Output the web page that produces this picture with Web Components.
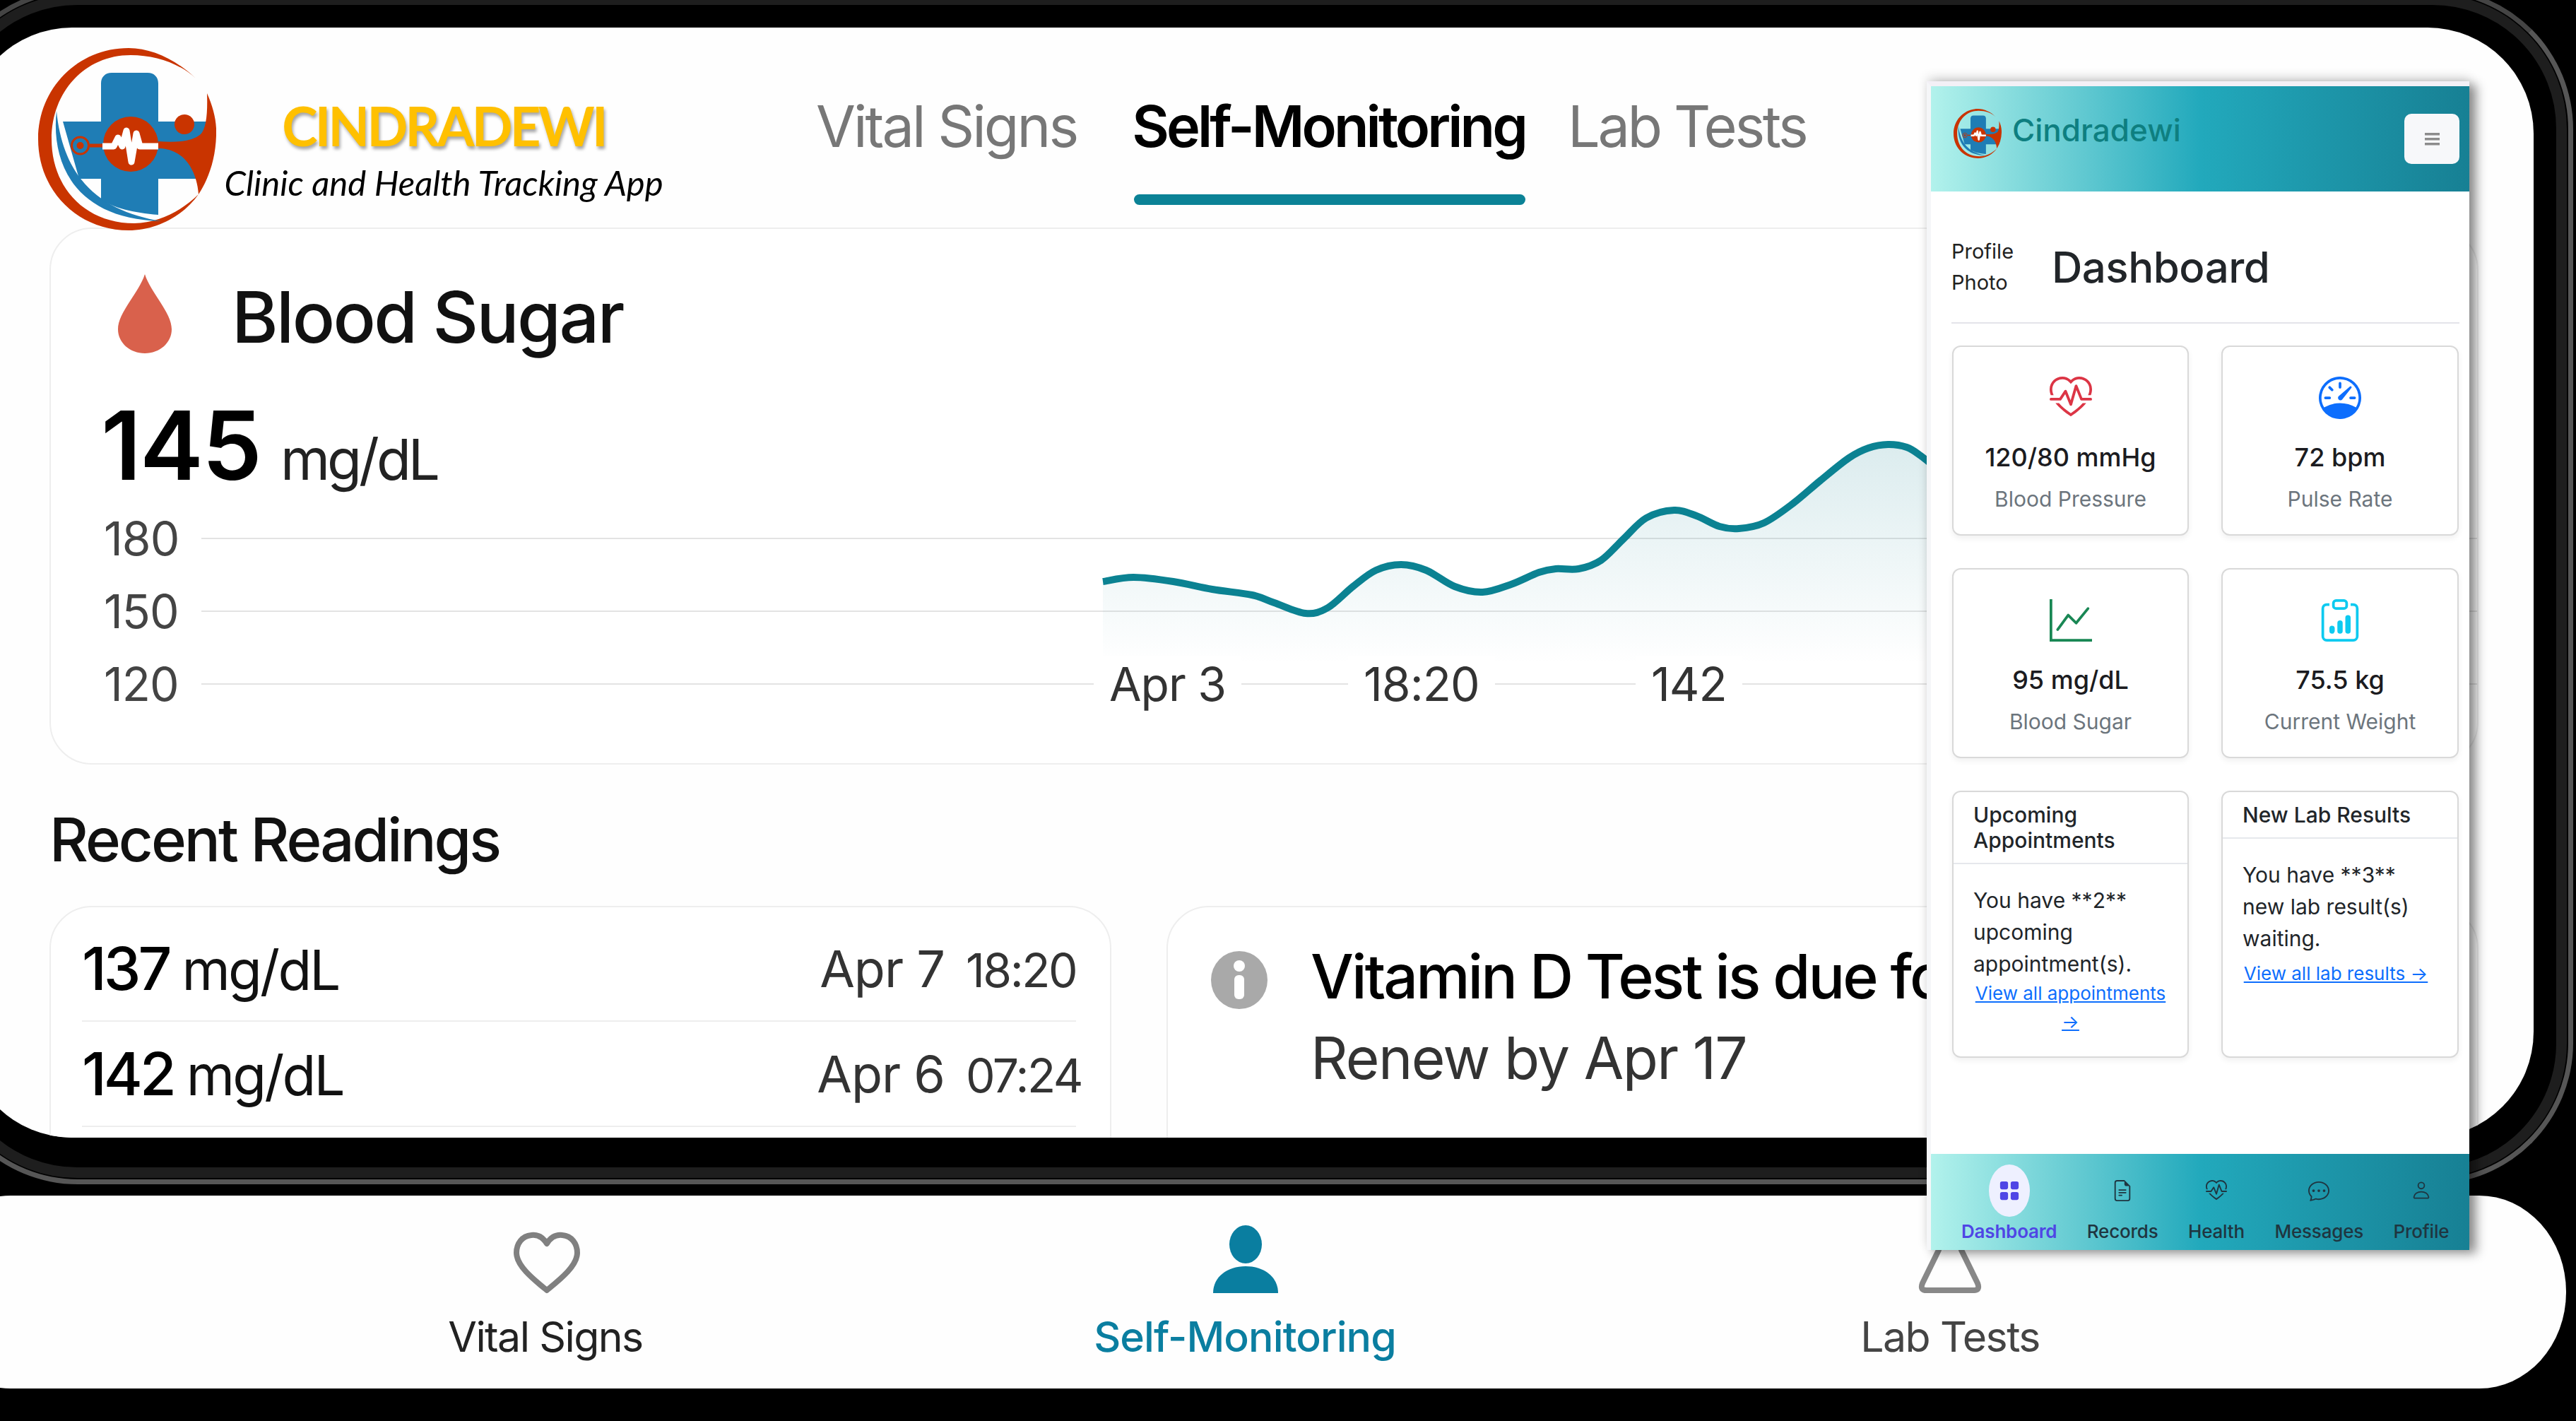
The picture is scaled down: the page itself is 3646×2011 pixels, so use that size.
<!doctype html>
<html>
<head>
<meta charset="utf-8">
<title>Cindradewi</title>
<style>
  html, body { margin: 0; background: #000; }
  body { font-family: Inter, "Liberation Sans", sans-serif; }
</style>
</head>
<body>
<cd-app></cd-app>
<script>
// bootstrap-icons style glyphs, 16x16 grid
const ICONS = {
	heartPulse: '<path d="m8 2.748-.717-.737C5.6.281 2.514.878 1.4 3.053.918 3.995.78 5.323 1.508 7H.43c-2.128-5.697 4.165-8.83 7.394-5.857q.09.083.176.171a3 3 0 0 1 .176-.17c3.23-2.974 9.522.159 7.394 5.856h-1.078c.728-1.677.59-3.005.108-3.947C13.486.878 10.4.28 8.717 2.01zM2.212 10h1.315C4.593 11.183 6.05 12.458 8 13.795c1.949-1.337 3.407-2.612 4.473-3.795h1.315c-1.265 1.566-3.14 3.25-5.788 5-2.648-1.75-4.523-3.434-5.788-5"/><path d="M10.464 3.314a.5.5 0 0 0-.945.049L7.921 8.956 6.464 5.314a.5.5 0 0 0-.88-.091L3.732 8H.5a.5.5 0 0 0 0 1H4a.5.5 0 0 0 .416-.223l1.473-2.209 1.647 4.118a.5.5 0 0 0 .945-.049l1.598-5.593 1.457 3.642A.5.5 0 0 0 12 9h3.5a.5.5 0 0 0 0-1h-3.162z"/>',
	speedometer: '<path d="M8 2a.5.5 0 0 1 .5.5V4a.5.5 0 0 1-1 0V2.5A.5.5 0 0 1 8 2M3.732 3.732a.5.5 0 0 1 .707 0l.915.914a.5.5 0 1 1-.708.708l-.914-.915a.5.5 0 0 1 0-.707M2 8a.5.5 0 0 1 .5-.5h1.586a.5.5 0 0 1 0 1H2.5A.5.5 0 0 1 2 8m9.5 0a.5.5 0 0 1 .5-.5h1.5a.5.5 0 0 1 0 1H12a.5.5 0 0 1-.5-.5m.754-4.246a.39.39 0 0 0-.527-.02L7.547 7.31A.91.91 0 1 0 8.85 8.569l3.434-4.297a.39.39 0 0 0-.029-.518z"/><path fill-rule="evenodd" d="M6.664 15.889A8 8 0 1 1 9.336.11a8 8 0 0 1-2.672 15.78zm-4.665-4.283A11.95 11.95 0 0 1 8 10c2.186 0 4.236.585 6.001 1.606a7 7 0 1 0-12.002 0"/>',
	graphUp: '<path fill-rule="evenodd" d="M0 0h1v15h15v1H0zm14.817 3.113a.5.5 0 0 1 .07.704l-4.5 5.5a.5.5 0 0 1-.74.037L7.06 6.767l-3.656 5.027a.5.5 0 0 1-.808-.588l4-5.5a.5.5 0 0 1 .758-.06l2.609 2.61 4.15-5.073a.5.5 0 0 1 .704-.07"/>',
	clipboardData: '<path d="M4 11a1 1 0 1 1 2 0v1a1 1 0 1 1-2 0zm6-4a1 1 0 1 1 2 0v5a1 1 0 1 1-2 0zM7 9a1 1 0 0 1 2 0v3a1 1 0 1 1-2 0z"/><path d="M4 1.5H3a2 2 0 0 0-2 2V14a2 2 0 0 0 2 2h10a2 2 0 0 0 2-2V3.5a2 2 0 0 0-2-2h-1v1h1a1 1 0 0 1 1 1V14a1 1 0 0 1-1 1H3a1 1 0 0 1-1-1V3.5a1 1 0 0 1 1-1h1z"/><path d="M9.5 1a.5.5 0 0 1 .5.5v1a.5.5 0 0 1-.5.5h-3a.5.5 0 0 1-.5-.5v-1a.5.5 0 0 1 .5-.5zm-3-1A1.5 1.5 0 0 0 5 1.5v1A1.5 1.5 0 0 0 6.5 4h3A1.5 1.5 0 0 0 11 2.5v-1A1.5 1.5 0 0 0 9.5 0z"/>',
	gridFill: '<path d="M1 2.5A1.5 1.5 0 0 1 2.5 1h3A1.5 1.5 0 0 1 7 2.5v3A1.5 1.5 0 0 1 5.5 7h-3A1.5 1.5 0 0 1 1 5.5zm8 0A1.5 1.5 0 0 1 10.5 1h3A1.5 1.5 0 0 1 15 2.5v3A1.5 1.5 0 0 1 13.5 7h-3A1.5 1.5 0 0 1 9 5.5zm-8 8A1.5 1.5 0 0 1 2.5 9h3A1.5 1.5 0 0 1 7 10.5v3A1.5 1.5 0 0 1 5.5 15h-3A1.5 1.5 0 0 1 1 13.5zm8 0a1.5 1.5 0 0 1 1.5-1.5h3a1.5 1.5 0 0 1 1.5 1.5v3a1.5 1.5 0 0 1-1.5 1.5h-3A1.5 1.5 0 0 1 9 13.5z"/>',
	fileText: '<path d="M5.5 7a.5.5 0 0 0 0 1h5a.5.5 0 0 0 0-1zM5 9.5a.5.5 0 0 1 .5-.5h5a.5.5 0 0 1 0 1h-5a.5.5 0 0 1-.5-.5m0 2a.5.5 0 0 1 .5-.5h2a.5.5 0 0 1 0 1h-2a.5.5 0 0 1-.5-.5"/><path d="M9.5 0H4a2 2 0 0 0-2 2v12a2 2 0 0 0 2 2h8a2 2 0 0 0 2-2V4.5zm0 1v2A1.5 1.5 0 0 0 11 4.5h2V14a1 1 0 0 1-1 1H4a1 1 0 0 1-1-1V2a1 1 0 0 1 1-1z"/>',
	chatDots: '<path d="M5 8a1 1 0 1 1-2 0 1 1 0 0 1 2 0m4 0a1 1 0 1 1-2 0 1 1 0 0 1 2 0m3 1a1 1 0 1 0 0-2 1 1 0 0 0 0 2"/><path d="m2.165 15.803.02-.004c1.83-.363 2.948-.842 3.468-1.105A9 9 0 0 0 8 15c4.418 0 8-3.134 8-7s-3.582-7-8-7-8 3.134-8 7c0 1.76.743 3.37 1.97 4.6a10.4 10.4 0 0 1-.524 2.318l-.003.011a11 11 0 0 1-.244.637c-.079.186.074.394.273.362a22 22 0 0 0 .693-.125m.8-3.108a1 1 0 0 0-.287-.801C1.618 10.83 1 9.468 1 8c0-3.192 3.004-6 7-6s7 2.808 7 6-3.004 6-7 6a8 8 0 0 1-2.088-.272 1 1 0 0 0-.711.074c-.387.196-1.24.57-2.634.893a11 11 0 0 0 .398-2"/>',
	person: '<circle cx="8" cy="3.6" r="2.7" fill="none" stroke="currentColor" stroke-width="1.1"/><path d="M2.6 14.6c-.8 0-1.1-.6-1-1.2C2 10.6 4.800 9 8 9s6 1.600 6.400 4.400c.1.600-.2 1.200-1 1.200z" fill="none" stroke="currentColor" stroke-width="1.1"/>'
}

const svgIcon = (name, size, color) =>
	`<svg width="${size}" height="${size}" viewBox="0 0 16 16" fill="${color}" style="color:${color}">${ICONS[name]}</svg>`

class CdLogo extends HTMLElement {
	connectedCallback() {
		const w = this.getAttribute('width') || 252
		const h = this.getAttribute('height') || 258
		this.attachShadow({ mode: 'open' }).innerHTML = `
      <style>:host { display: block; line-height: 0; }</style>
      <svg width="${w}" height="${h}" viewBox="54 68 252 258" preserveAspectRatio="none">
        <path fill="#c93400" d="M277 111C250 85 215 68 182 68 110 68 54 125 54 197c0 73 56 129 128 129 40 0 78-21 99-51-26 25-56 40-91 41C120 316 73 265 73 197 73 130 120 78 185 78c35 0 70 12 92 33z"/>
        <path fill="#1f7db5" d="M80 157c-8 73 25 153 148 156-78-13-138-53-148-156z"/>
        <path fill="#1f7db5" d="M143 118c0-9 6-15 15-15h51c9 0 15 6 15 15v54h69v81h-69v51c-35-3-65-10-81-22v-29h-31l-23-81h54z"/>
        <path fill="#c93400" d="M224 200c28 2 48 0 60-10 8-8 10-30 9-58 9 20 14 40 13 60-1 32-10 60-25 83-2-25-12-50-34-60-6-3-14-5-23-5z"/>
        <ellipse cx="261" cy="176" rx="14" ry="14" fill="#c93400"/>
        <ellipse cx="185" cy="204" rx="39" ry="39" fill="#c93400"/>
        <path stroke="#c93400" stroke-width="5" d="M127 206h24"/>
        <circle cx="113.500" cy="206" r="12" fill="none" stroke="#c93400" stroke-width="3"/>
        <circle cx="113.500" cy="206" r="5" fill="#c93400"/>
        <path fill="none" stroke="#fff" stroke-width="9" stroke-linejoin="round" d="M145 207h16l6-12 6 12 6-22 7 44 7-40 5 18h26"/>
      </svg>`
	}
}

class CdBezel extends HTMLElement {
	connectedCallback() {
		this.attachShadow({ mode: 'open' }).innerHTML = `
      <style>
        :host { position: absolute; left: -90px; top: -17px; width: 3732px; height: 1693px; box-sizing: border-box; border: 7px solid #565656; border-top-color: #444; border-radius: 200px; }
        div { position: absolute; inset: 2px; border: 15px solid #1e1e1e; border-radius: 190px; }
      </style>
      <div></div>`
	}
}

class CdBrand extends HTMLElement {
	connectedCallback() {
		this.attachShadow({ mode: 'open' }).innerHTML = `
      <style>
        :host { display: flex; flex-direction: column; align-items: center; width: 620px; margin-left: 12px; margin-top: 97px; font-family: Lato, "Open Sans", sans-serif; }
        .name { color: #ffc000; font-weight: 700; font-size: 76px; line-height: 84px; letter-spacing: -3.7px; text-shadow: 2px 4px 4px rgba(0,0,0,.35); white-space: nowrap; }
        .tag { margin-top: 11px; color: #000; font-style: italic; font-size: 49px; line-height: 54px; white-space: nowrap; }
      </style>
      <div class="name"><slot name="name"></slot></div>
      <div class="tag"><slot name="tag"></slot></div>`
	}
}

class CdTopTab extends HTMLElement {
	connectedCallback() {
		const active = this.hasAttribute('active')
		this.attachShadow({ mode: 'open' }).innerHTML = `
      <style>
        :host { display: block; font-size: 81px; line-height: 100px; letter-spacing: ${active ? -3.9 : -3}px; white-space: nowrap; color: ${active ? '#000' : '#777'}; font-weight: ${active ? 600 : 400}; }
        .bar { height: 15px; margin-top: 46px; margin-left: 3px; border-radius: 8px; background: ${active ? '#0b8296' : 'transparent'}; }
      </style>
      <slot></slot>
      <div class="bar"></div>`
	}
}

class CdTrendCard extends HTMLElement {
	connectedCallback() {
		const pts = [[1561,823],[1605,817],[1662,823],[1718,834],[1775,842],[1807,853],[1852,868],[1884,860],[1920,830],[1953,807],[1989,799],[2025,807],[2066,830],[2106,838],[2147,827],[2187,810],[2211,805],[2244,805],[2276,793],[2308,763],[2341,733],[2381,722],[2413,730],[2446,745],[2474,748],[2510,740],[2551,713],[2591,680],[2632,648],[2660,634],[2688,629],[2715,633],[2735,645],[2760,665]]
			.map(([x, y]) => [1561 + (x - 1561) * 0.986, y])
		// catmull-rom through the measured points
		let line = `M${pts[0][0]} ${pts[0][1]}`
		for (let i = 0; i < pts.length - 1; i++) {
			const p0 = pts[i - 1] || pts[i], p1 = pts[i], p2 = pts[i + 1], p3 = pts[i + 2] || p2
			line += `C${p1[0] + (p2[0] - p0[0]) / 6} ${p1[1] + (p2[1] - p0[1]) / 6} ${p2[0] - (p3[0] - p1[0]) / 6} ${p2[1] - (p3[1] - p1[1]) / 6} ${p2[0]} ${p2[1]}`
		}
		this.attachShadow({ mode: 'open' }).innerHTML = `
      <style>
        :host { display: block; position: relative; box-sizing: border-box; width: 3438px; height: 760px; background: #fff; border: 2px solid #eee; border-radius: 60px; color: #111; }
        .title { display: flex; align-items: center; height: 112px; margin: 64px 0 0 95px; gap: 85px; font-size: 100px; font-weight: 500; letter-spacing: -2.6px; }
        .title span { position: relative; top: 4px; }
        .value { display: flex; align-items: baseline; gap: 28px; height: 136px; margin: 62px 0 0 71px; line-height: 136px; }
        .value b { font-size: 135px; font-weight: 600; color: #000; letter-spacing: -2px; }
        .value span { font-size: 80px; color: #222; letter-spacing: -4px; }
        .chart { margin-top: 12px; }
        .row { display: flex; align-items: center; height: 103px; padding-left: 75px; font-size: 66px; color: #444; letter-spacing: -1px; }
        .row span { width: 138px; flex: none; }
        .row i { flex: 1; height: 2px; background: #e3e3e3; }
        svg.curve { position: absolute; left: -2px; top: -2px; pointer-events: none; }
        .tick { position: absolute; top: 604px; height: 80px; padding: 0 22px; background: #fff; font-size: 66px; line-height: 80px; color: #333; letter-spacing: -1px; }
      </style>
      <div class="title">
        <svg width="76" height="112" viewBox="0 0 76 112"><path fill="#d9614c" d="M38 0c8 26 38 54 38 78 0 19-17 34-38 34S0 97 0 78C0 54 30 26 38 0z"/></svg>
        <span><slot name="title"></slot></span>
      </div>
      <div class="value"><b><slot name="value"></slot></b><span><slot name="unit"></slot></span></div>
      <div class="chart">
        <div class="row"><span>180</span><i></i></div>
        <div class="row"><span>150</span><i></i></div>
        <div class="row"><span>120</span><i></i></div>
      </div>
      <svg class="curve" width="3438" height="760" viewBox="70 322 3438 760">
        <defs><linearGradient id="fade" gradientUnits="userSpaceOnUse" x1="0" y1="620" x2="0" y2="940">
          <stop offset="0" stop-color="#0b7d8c" stop-opacity=".15"/><stop offset="1" stop-color="#0b7d8c" stop-opacity="0"/>
        </linearGradient></defs>
        <path d="${line}V940H1561Z" fill="url(#fade)"/>
        <path d="${line}" fill="none" stroke="#0b8292" stroke-width="10"/>
      </svg>
      <div class="tick" style="left:1476px">Apr 3</div>
      <div class="tick" style="left:1836px">18:20</div>
      <div class="tick" style="left:2243px">142</div>`
	}
}

class CdReading extends HTMLElement {
	connectedCallback() {
		this.attachShadow({ mode: 'open' }).innerHTML = `
      <style>
        :host { display: flex; align-items: baseline; height: 149px; box-sizing: border-box; border-bottom: 2px solid #eee; padding-top: 23px; }
        b { font-size: 84px; font-weight: 500; color: #000; letter-spacing: -4px; margin-right: 18px; }
        .unit { font-size: 78px; color: #111; letter-spacing: -2.800px; }
        .date { position: relative; top: -4px; margin-left: auto; font-size: 72px; color: #333; letter-spacing: -1px; }
        .time { position: relative; top: -4px; width: 156px; margin-left: 30px; text-align: right; font-size: 66px; color: #333; letter-spacing: -2.500px; white-space: nowrap; }
      </style>
      <b>${this.getAttribute('value')}</b>
      <span class="unit">mg/dL</span>
      <span class="date">${this.getAttribute('date')}</span>
      <span class="time">${this.getAttribute('time')}</span>`
	}
}

class CdAlert extends HTMLElement {
	connectedCallback() {
		this.attachShadow({ mode: 'open' }).innerHTML = `
      <style>
        :host { display: flex; box-sizing: border-box; width: 1857px; height: 420px; border: 2px solid #eee; border-radius: 60px; background: #fff; padding: 62px 0 0 61px; gap: 61px; overflow: hidden; }
        .head { margin-top: -14px; font-size: 86px; line-height: 100px; font-weight: 500; color: #000; letter-spacing: -3px; white-space: nowrap; }
        .sub { font-size: 82px; line-height: 100px; margin-top: 16px; color: #333; letter-spacing: -1.7px; white-space: nowrap; }
        svg { flex: none; }
      </style>
      <svg width="80" height="82" viewBox="0 0 80 82">
        <ellipse cx="40" cy="41" rx="40" ry="41" fill="#a9a9a9"/>
        <circle cx="40" cy="21" r="8" fill="#fff"/>
        <rect x="33" y="34" width="14" height="34" rx="6" fill="#fff"/>
      </svg>
      <div><div class="head"><slot name="head"></slot></div><div class="sub"><slot name="sub"></slot></div></div>`
	}
}

class CdBottomTab extends HTMLElement {
	connectedCallback() {
		const active = this.hasAttribute('active')
		const glyphs = {
			heart: '<path d="M52 28C46 18 38 15 30 16 17 17 9 28 9 41c0 19 26 39 43 53 17-14 43-34 43-53 0-13-8-24-21-25-8-1-16 2-22 12z" fill="none" stroke="#808080" stroke-width="8" stroke-linejoin="round"/>',
			person: '<ellipse cx="51" cy="29" rx="23" ry="27" fill="#0a7ea0"/><path fill="#0a7ea0" d="M5 98C5 75 25 60 51 60s46 15 46 38z"/>',
			flask: '<path d="M34 5v32L11 84c-3 8 0 10 6 10h66c6 0 9-2 6-10L66 37V5" fill="none" stroke="#888" stroke-width="8" stroke-linejoin="round"/>'
		}
		this.attachShadow({ mode: 'open' }).innerHTML = `
      <style>
        :host { display: flex; flex-direction: column; align-items: center; padding-top: 40px; font-size: 59px; line-height: 72px; letter-spacing: ${active ? -.9 : -1.6}px; color: ${active ? '#0a7ea0' : (this.getAttribute('tone') || '#222')}; font-weight: ${active ? 500 : 400}; white-space: nowrap; }
        svg { margin-bottom: 24px; }
      </style>
      <svg width="100" height="100" viewBox="0 0 100 100">${glyphs[this.getAttribute('icon')]}</svg>
      <slot></slot>`
	}
}

class CdStat extends HTMLElement {
	connectedCallback() {
		this.attachShadow({ mode: 'open' }).innerHTML = `
      <style>
        :host { display: flex; flex-direction: column; align-items: center; box-sizing: border-box; height: 269px; padding-top: 42px; background: #fff; border: 2px solid #d9d9d9; border-radius: 12px; box-shadow: 0 4px 8px rgba(0,0,0,.06); }
        svg { display: block; }
        .value { margin-top: 36px; font-size: 36px; line-height: 36px; font-weight: 500; color: #1b1b20; white-space: nowrap; }
        .label { margin-top: 24px; font-size: 30px; line-height: 34px; color: #6c757d; white-space: nowrap; }
      </style>
      ${svgIcon(this.getAttribute('icon'), 60, this.getAttribute('color'))}
      <div class="value"><slot name="value"></slot></div>
      <div class="label"><slot name="label"></slot></div>`
	}
}

class CdInfoCard extends HTMLElement {
	connectedCallback() {
		this.attachShadow({ mode: 'open' }).innerHTML = `
      <style>
        :host { display: block; box-sizing: border-box; height: 378px; background: #fff; border: 2px solid #d9d9d9; border-radius: 12px; box-shadow: 0 4px 8px rgba(0,0,0,.06); }
        .head { padding: 14px 28px; font-size: 30px; line-height: 36px; font-weight: 500; color: #212529; border-bottom: 2px solid #e6e8ec; }
        .body { padding: 29px 28px 0; font-size: 30px; line-height: 45px; color: #212529; }
        .link { margin: var(--link-gap, -1px) var(--link-right, -6px) 0 -6px; text-align: center; font-size: 26px; line-height: 40px; color: #0d6efd; text-decoration: underline; }
      </style>
      <div class="head"><slot name="head"></slot></div>
      <div class="body"><slot name="body"></slot><div class="link"><slot name="link"></slot></div></div>`
	}
}

class CdNavItem extends HTMLElement {
	connectedCallback() {
		const active = this.hasAttribute('active')
		const size = this.getAttribute('size') || 30
		this.attachShadow({ mode: 'open' }).innerHTML = `
      <style>
        :host { display: flex; flex-direction: column; align-items: center; font-size: 26px; line-height: 30px; letter-spacing: -.2px; font-weight: ${active ? 600 : 500}; color: ${active ? '#4f46e5' : '#1f3540'}; white-space: nowrap; }
        .pill { display: flex; align-items: center; justify-content: center; width: 58px; height: 74px; margin-bottom: 6px; border-radius: 50%; background: ${active ? '#eef0ff' : 'transparent'}; }
        svg { display: block; }
      </style>
      <div class="pill">${svgIcon(this.getAttribute('icon'), size, active ? '#4f46e5' : '#1f3540')}</div>
      <slot></slot>`
	}
}

class CdPhone extends HTMLElement {
	connectedCallback() {
		this.attachShadow({ mode: 'open' }).innerHTML = `
      <style>
        :host { position: absolute; left: 2727px; top: 115px; width: 768px; height: 1654px; box-sizing: border-box; display: flex; flex-direction: column; background: #fff; border-left: 6px solid #f5f6f8; border-top: 7px solid #f3f0f6; box-shadow: 10px 5px 14px rgba(0,0,0,.42), 0 -6px 14px rgba(0,0,0,.12); }
        header, nav { background: linear-gradient(90deg, #b2f2ec 0%, #22a9bc 50%, #178094 100%); }
        header { display: flex; align-items: flex-start; height: 149px; flex: none; padding: 32px 14px 0 32px; box-sizing: border-box; }
        .brand { margin: 5px 0 0 15px; font-size: 44px; line-height: 50px; font-weight: 500; color: #0e7f80; }
        .burger { margin: 7px 0 0 auto; width: 78px; height: 71px; border-radius: 10px; background: #f7f8fa; display: flex; align-items: center; justify-content: center; }
        main { flex: 1; padding: 0 14px 0 29px; }
        .top { display: flex; align-items: center; height: 187px; padding-top: 28px; box-sizing: border-box; border-bottom: 2px solid #e4e4ea; }
        .photo { width: 142px; flex: none; font-size: 29px; line-height: 44px; color: #222; }
        h1 { margin: 0; font-size: 60px; font-weight: 500; color: #212529; letter-spacing: -.5px; }
        .grid { display: grid; grid-template-columns: 335px 336px; column-gap: 46px; row-gap: 46px; margin: 31px 0 0 1px; }
        nav { display: flex; flex: none; height: 136px; padding: 15px 0 0 43px; gap: 42.5px; box-sizing: border-box; }
      </style>
      <header>
        <cd-logo width="68" height="70"></cd-logo>
        <div class="brand">Cindradewi</div>
        <div class="burger"><svg width="21" height="18" viewBox="0 0 21 18" fill="#8c8c8c"><rect width="21" height="3.500"/><rect y="7" width="21" height="3.500"/><rect y="14" width="21" height="3.500"/></svg></div>
      </header>
      <main>
        <div class="top"><div class="photo">Profile<br>Photo</div><h1>Dashboard</h1></div>
        <div class="grid">
          <cd-stat icon="heartPulse" color="#dc3545"><span slot="value">120/80 mmHg</span><span slot="label">Blood Pressure</span></cd-stat>
          <cd-stat icon="speedometer" color="#0d6efd"><span slot="value">72 bpm</span><span slot="label">Pulse Rate</span></cd-stat>
          <cd-stat icon="graphUp" color="#198754"><span slot="value">95 mg/dL</span><span slot="label">Blood Sugar</span></cd-stat>
          <cd-stat icon="clipboardData" color="#0dcaf0"><span slot="value">75.5 kg</span><span slot="label">Current Weight</span></cd-stat>
          <cd-info-card><span slot="head">Upcoming Appointments</span><span slot="body">You have **2** upcoming appointment(s).</span><span slot="link">View all appointments →</span></cd-info-card>
          <cd-info-card style="--link-gap:7px;--link-right:6px"><span slot="head">New Lab Results</span><span slot="body">You have **3** new lab result(s) waiting.</span><span slot="link">View all lab results →</span></cd-info-card>
        </div>
      </main>
      <nav>
        <cd-nav-item icon="gridFill" size="30" active>Dashboard</cd-nav-item>
        <cd-nav-item icon="fileText" size="30">Records</cd-nav-item>
        <cd-nav-item icon="heartPulse" size="30">Health</cd-nav-item>
        <cd-nav-item icon="chatDots" size="30">Messages</cd-nav-item>
        <cd-nav-item icon="person" size="26">Profile</cd-nav-item>
      </nav>`
	}
}

class CdApp extends HTMLElement {
	connectedCallback() {
		this.attachShadow({ mode: 'open' }).innerHTML = `
      <style>
        :host { display: block; position: relative; width: 3646px; height: 2011px; overflow: hidden; background: #000; font-family: Inter, "Liberation Sans", sans-serif; }
        .screen { position: relative; width: 3634px; height: 1571px; margin: 39px 0 0 -48px; box-sizing: border-box; padding-left: 118px; background: #fefefe; border-radius: 150px; overflow: hidden; }
        .top { display: flex; height: 283px; }
        .top cd-logo { margin: 29px 0 -10px -16px; position: relative; z-index: 1; flex: none; }
        .tabs { display: flex; gap: 78px; margin: 90px 0 0 217px; }
        .tabs cd-top-tab:last-child { margin-left: -18px; letter-spacing: -3.4px; }
        h2 { display: flex; align-items: center; height: 200px; padding-top: 13px; box-sizing: border-box; margin: 0; font-size: 85px; font-weight: 500; color: #111; letter-spacing: -3px; }
        .lower { display: flex; gap: 78px; }
        .readings { box-sizing: border-box; width: 1503px; height: 420px; padding: 13px 48px 0 44px; border: 2px solid #eee; border-radius: 60px; background: #fff; }
        .bar { display: grid; grid-template-columns: 990px 990px 1006px; width: 3740px; height: 273px; margin: 82px 0 0 -108px; padding-left: 385px; box-sizing: border-box; background: #fefefe; border-radius: 123px / 136px; }
      </style>
      <cd-bezel></cd-bezel>
      <div class="screen">
        <div class="top">
          <cd-logo></cd-logo>
          <cd-brand><span slot="name">CINDRADEWI</span><span slot="tag">Clinic and Health Tracking App</span></cd-brand>
          <div class="tabs">
            <cd-top-tab>Vital Signs</cd-top-tab>
            <cd-top-tab active>Self-Monitoring</cd-top-tab>
            <cd-top-tab>Lab Tests</cd-top-tab>
          </div>
        </div>
        <cd-trend-card>
          <span slot="title">Blood Sugar</span>
          <span slot="value">145</span>
          <span slot="unit">mg/dL</span>
        </cd-trend-card>
        <h2>Recent Readings</h2>
        <div class="lower">
          <div class="readings">
            <cd-reading value="137" date="Apr 7" time="18:20"></cd-reading>
            <cd-reading value="142" date="Apr 6" time="07:24"></cd-reading>
          </div>
          <cd-alert><span slot="head">Vitamin D Test is due for</span><span slot="sub">Renew by Apr 17</span></cd-alert>
        </div>
      </div>
      <div class="bar">
        <cd-bottom-tab icon="heart">Vital Signs</cd-bottom-tab>
        <cd-bottom-tab icon="person" active>Self-Monitoring</cd-bottom-tab>
        <cd-bottom-tab icon="flask" tone="#444">Lab Tests</cd-bottom-tab>
      </div>
      <cd-phone></cd-phone>`
	}
}

customElements.define('cd-logo', CdLogo)
customElements.define('cd-bezel', CdBezel)
customElements.define('cd-brand', CdBrand)
customElements.define('cd-top-tab', CdTopTab)
customElements.define('cd-trend-card', CdTrendCard)
customElements.define('cd-reading', CdReading)
customElements.define('cd-alert', CdAlert)
customElements.define('cd-bottom-tab', CdBottomTab)
customElements.define('cd-stat', CdStat)
customElements.define('cd-info-card', CdInfoCard)
customElements.define('cd-nav-item', CdNavItem)
customElements.define('cd-phone', CdPhone)
customElements.define('cd-app', CdApp)
</script>
</body>
</html>
